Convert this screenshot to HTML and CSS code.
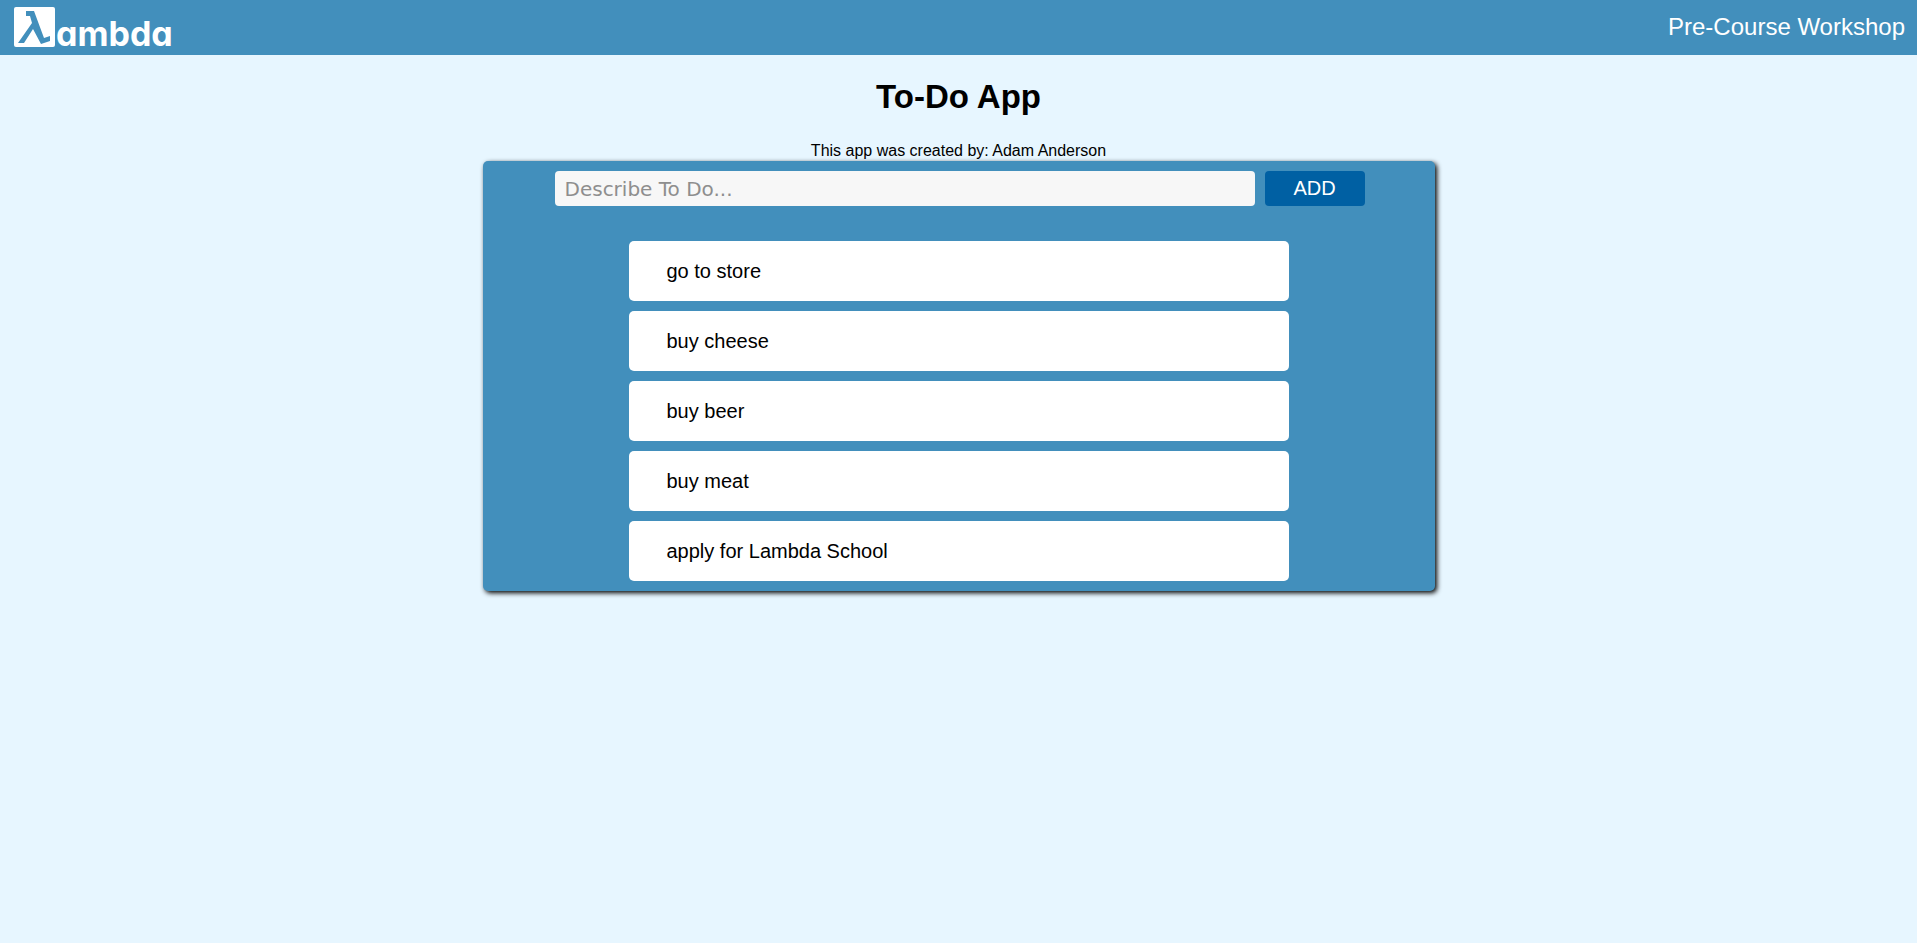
FILE: index.html
```html
<!DOCTYPE html>
<html lang="en">
<head>
<meta charset="utf-8">
<title>To-Do App</title>
<link rel="stylesheet" href="styles.css">
</head>
<body>
<header class="site-header">
  <div class="logo">
    <svg class="logo-mark" viewBox="0 0 41 40" aria-hidden="true">
      <rect width="41" height="40" rx="2" fill="#fff"/>
      <path fill="#428fbc" d="M12 4H20L30 31L36 29V34L27 37L19 22L10 36H4L18 16L16 9H12Z"/>
    </svg>
    <span class="logo-text">ambda</span>
  </div>
  <div class="tagline">Pre-Course Workshop</div>
</header>
<main class="page">
  <h1 class="title">To-Do App</h1>
  <p class="byline">This app was created by: Adam Anderson</p>
  <section class="panel">
    <form class="todo-form">
      <input class="todo-input" type="text" placeholder="Describe To Do..." aria-label="Describe To Do">
      <button class="add-button" type="button">ADD</button>
    </form>
    <ul class="todo-list">
      <li class="todo-item">go to store</li>
      <li class="todo-item">buy cheese</li>
      <li class="todo-item">buy beer</li>
      <li class="todo-item">buy meat</li>
      <li class="todo-item">apply for Lambda School</li>
    </ul>
  </section>
</main>
</body>
</html>
```
FILE: styles.css
```css
* {
  box-sizing: border-box;
}

body {
  min-height: 100vh;
  margin: 0;
  background: #e7f6ff;
  color: #000;
  font-family: "Liberation Sans", Helvetica, Arial, sans-serif;
}

.site-header {
  display: flex;
  justify-content: space-between;
  align-items: flex-start;
  height: 55px;
  padding: 7px 12px 0 14px;
  background: #428fbc;
  color: #fff;
}

.logo {
  display: flex;
  align-items: flex-start;
  gap: 1px;
}

.logo-mark {
  width: 41px;
  height: 40px;
}

.logo-text {
  padding-top: 9px;
  font-family: Inter, sans-serif;
  font-size: 34px;
  font-weight: 700;
  line-height: 36px;
  font-feature-settings: "cv11";
}

.tagline {
  padding-top: 6px;
  font-size: 24px;
  line-height: 28px;
}

.page {
  padding-bottom: 20px;
  text-align: center;
}

.title {
  margin: 0;
  padding: 24px 0 26px;
  font-size: 33px;
  line-height: 36px;
}

.byline {
  margin: 0;
  font-size: 16px;
  line-height: 20px;
}

.panel {
  width: 952px;
  max-width: 100%;
  margin: 0 auto;
  padding: 10px;
  border-radius: 5px;
  background: #428fbc;
  box-shadow: 2px 2px 5px #000;
}

.todo-form {
  display: flex;
  justify-content: center;
  gap: 10px;
  margin-bottom: 35px;
  padding-left: 2px;
}

.todo-input {
  flex: 0 1 700px;
  min-width: 0;
  height: 35px;
  padding: 0 10px;
  border: 0;
  border-radius: 4px;
  background: #f7f7f7;
  font-family: "DejaVu Sans", sans-serif;
  font-size: 20px;
}

.todo-input::placeholder {
  color: #8e8e8e;
}

.add-button {
  width: 100px;
  height: 35px;
  padding: 0;
  border: 0;
  border-radius: 4px;
  background: #0060a3;
  color: #fff;
  font-family: inherit;
  font-size: 20px;
}

.todo-list {
  display: flex;
  flex-direction: column;
  gap: 10px;
  width: 660px;
  max-width: 100%;
  margin: 0 auto;
  padding: 0;
  list-style: none;
  text-align: left;
}

.todo-item {
  padding: 18px 38px;
  border-radius: 5px;
  background: #fff;
  font-size: 20px;
  line-height: 24px;
}
```
